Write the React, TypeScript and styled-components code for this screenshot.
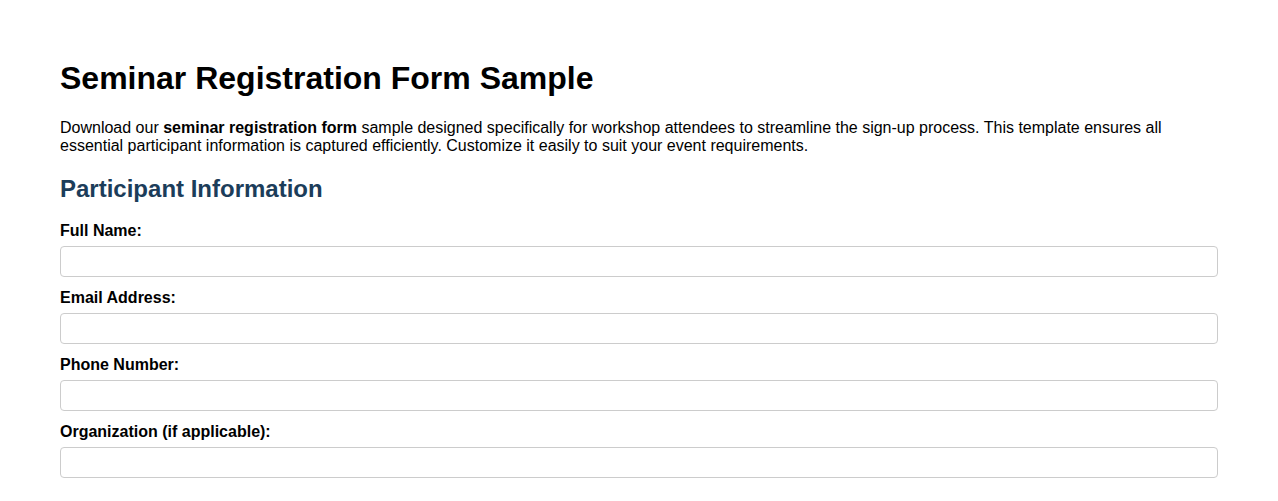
import React from "react";
import styled, {createGlobalStyle} from "styled-components";

const GlobalStyle = createGlobalStyle`
  body {
    margin: 0;
    background: #ffffff;
    color: #000000;
    font-family: "Liberation Sans", Arial, sans-serif;
  }
`

const Page = styled.div`
  padding: 39px 60px 0;
`

const Title = styled.h1`
  font-size: 32px;
  font-weight: bold;
  margin: 21.44px 0;
`

const Intro = styled.p`
  font-size: 16px;
  margin: 16px 0;
`

const SectionTitle = styled.h2`
  font-size: 24px;
  font-weight: bold;
  color: #1c3d5a;
  margin: 19.9px 0 19px;
`

const Field = styled.div`
  display: flex;
  flex-direction: column;
  margin-bottom: 12px;
`

const Label = styled.label`
  font-size: 16px;
  font-weight: bold;
  margin-bottom: 6px;
`

const Input = styled.input`
  box-sizing: border-box;
  width: 100%;
  height: 31px;
  padding: 6px 8px;
  font-size: 15px;
  font-family: inherit;
  border: 1px solid #cccccc;
  border-radius: 4px;
  background: #ffffff;
`

const fields = [
    {id: "fullName", label: "Full Name:", type: "text"},
    {id: "email", label: "Email Address:", type: "email"},
    {id: "phone", label: "Phone Number:", type: "tel"},
    {id: "organization", label: "Organization (if applicable):", type: "text"},
]

export default function App() {
    return (
        <Page>
            <GlobalStyle/>
            <Title>Seminar Registration Form Sample</Title>
            <Intro>
                Download our <strong>seminar registration form</strong> sample designed specifically for workshop
                attendees to streamline the sign-up process. This template ensures all essential participant
                information is captured efficiently. Customize it easily to suit your event requirements.
            </Intro>
            <SectionTitle>Participant Information</SectionTitle>
            <form>
                {fields.map(f => (
                    <Field key={f.id}>
                        <Label htmlFor={f.id}>{f.label}</Label>
                        <Input id={f.id} name={f.id} type={f.type}/>
                    </Field>
                ))}
            </form>
        </Page>
    );
}
